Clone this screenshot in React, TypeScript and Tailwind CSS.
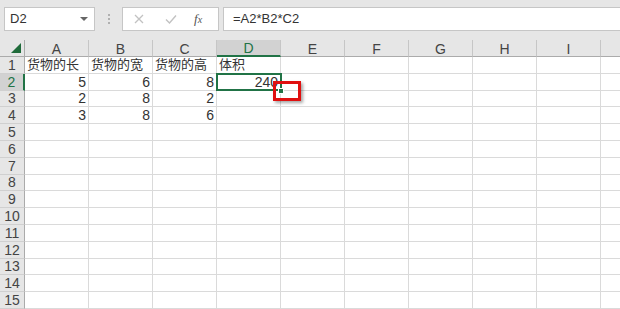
import React from "react";

const cols = ["A", "B", "C", "D", "E", "F", "G", "H", "I", ""];

const data: Record<string, string[]> = {
    "1": ["货物的长", "货物的宽", "货物的高", "体积"],
    "2": ["5", "6", "8", "240"],
    "3": ["2", "8", "2", ""],
    "4": ["3", "8", "6", ""],
};

const App: React.FC = () => {
    const rows = Array.from({ length: 15 }, (_, i) => String(i + 1));

    return (
        <div className="relative w-[620px] h-[309px] overflow-hidden bg-[#e6e6e6] font-['Liberation_Sans','Noto_Sans_CJK_SC',sans-serif] text-[#333]">
            {/* formula bar */}
            <div className="flex h-[40px] items-start pt-[7px] pl-[4px]">
                <div className="flex h-[24px] w-[91px] items-center justify-between border border-[#c6c6c6] bg-white pl-[5px] pr-[6px] text-[13px]">
                    <span>D2</span>
                    <span className="h-0 w-0 border-x-[4px] border-t-[4px] border-x-transparent border-t-[#666]" />
                </div>
                <div className="flex h-[24px] w-[27px] flex-col items-center justify-center gap-[2px]">
                    <span className="h-[2px] w-[2px] bg-[#b0b0b0]" />
                    <span className="h-[2px] w-[2px] bg-[#b0b0b0]" />
                    <span className="h-[2px] w-[2px] bg-[#b0b0b0]" />
                </div>
                <div className="flex h-[24px] w-[97px] items-center border border-[#c6c6c6] bg-white">
                    <svg className="ml-[11px]" width="10" height="10" viewBox="0 0 10 10">
                        <path d="M1 1L9 9M9 1L1 9" stroke="#c2c2c2" strokeWidth="1.3" />
                    </svg>
                    <svg className="ml-[21px]" width="12" height="10" viewBox="0 0 12 10">
                        <path d="M1 5.5L4.5 9L11 1.5" stroke="#c2c2c2" strokeWidth="1.4" fill="none" />
                    </svg>
                    <span className="ml-[17px] font-['Liberation_Serif',serif] text-[13px] italic text-[#555]">
                        f<span className="text-[10px]">x</span>
                    </span>
                </div>
                <div className="ml-[4px] flex h-[24px] flex-1 items-center border border-r-0 border-[#c6c6c6] bg-white pl-[9px] text-[13px]">
                    =A2*B2*C2
                </div>
            </div>

            {/* sheet */}
            <div className="relative">
                <div className="grid grid-cols-[25px_repeat(9,64px)_64px] grid-rows-[17px_repeat(15,16.8px)] text-[14px]">
                    {/* header row */}
                    <div className="relative border-b border-r border-[#ababab] bg-[#e6e6e6]">
                        <span className="absolute bottom-[3px] right-[3px] h-0 w-0 border-l-[10px] border-l-transparent [border-bottom:10px_solid_#1f6b3a]" />
                    </div>
                    {cols.map((c, i) => (
                        <div
                            key={c + i}
                            className={
                                c === "D"
                                    ? "flex items-center justify-center border-b-2 border-r border-b-[#217346] border-r-[#c6c6c6] bg-[#d2d2d2] pt-[1px] leading-none text-[#217346]"
                                    : "flex items-center justify-center border-b border-r border-b-[#ababab] border-r-[#c6c6c6] bg-[#e6e6e6] pt-[1px] leading-none text-[#444]"
                            }
                        >
                            {c}
                        </div>
                    ))}

                    {rows.map((r) => (
                        <React.Fragment key={r}>
                            <div
                                className={
                                    r === "2"
                                        ? "flex items-center justify-center border-b border-r-2 border-b-[#d0d0d0] border-r-[#217346] bg-[#d2d2d2] leading-none text-[#217346]"
                                        : "flex items-center justify-center border-b border-r border-b-[#d0d0d0] border-r-[#ababab] bg-[#e6e6e6] leading-none text-[#444]"
                                }
                            >
                                {r}
                            </div>
                            {cols.map((c, i) => {
                                const v = data[r]?.[i] ?? "";
                                const isText = r === "1";
                                return (
                                    <div
                                        key={r + c + i}
                                        className={
                                            isText
                                                ? "flex items-center overflow-visible whitespace-nowrap border-b border-r border-[#dadada] bg-white pl-[2px] text-[13px] leading-none text-[#333]"
                                                : "flex items-center justify-end border-b border-r border-[#dadada] bg-white pr-[2px] leading-none text-[#333]"
                                        }
                                    >
                                        {v}
                                    </div>
                                );
                            })}
                        </React.Fragment>
                    ))}
                </div>

                {/* selected cell D2 */}
                <div className="absolute left-[216px] top-[33px] h-[18px] w-[66px] border-2 border-[#217346]" />
                <div className="absolute left-[278px] top-[48px] h-[6px] w-[6px] border border-white bg-[#217346]" />

                {/* red highlight */}
                <div className="absolute left-[273px] top-[41px] h-[20px] w-[28px] border-[3px] border-[#e01010] shadow-[2px_2px_3px_rgba(0,0,0,0.35)]" />
            </div>
        </div>
    );
};

export default App;
